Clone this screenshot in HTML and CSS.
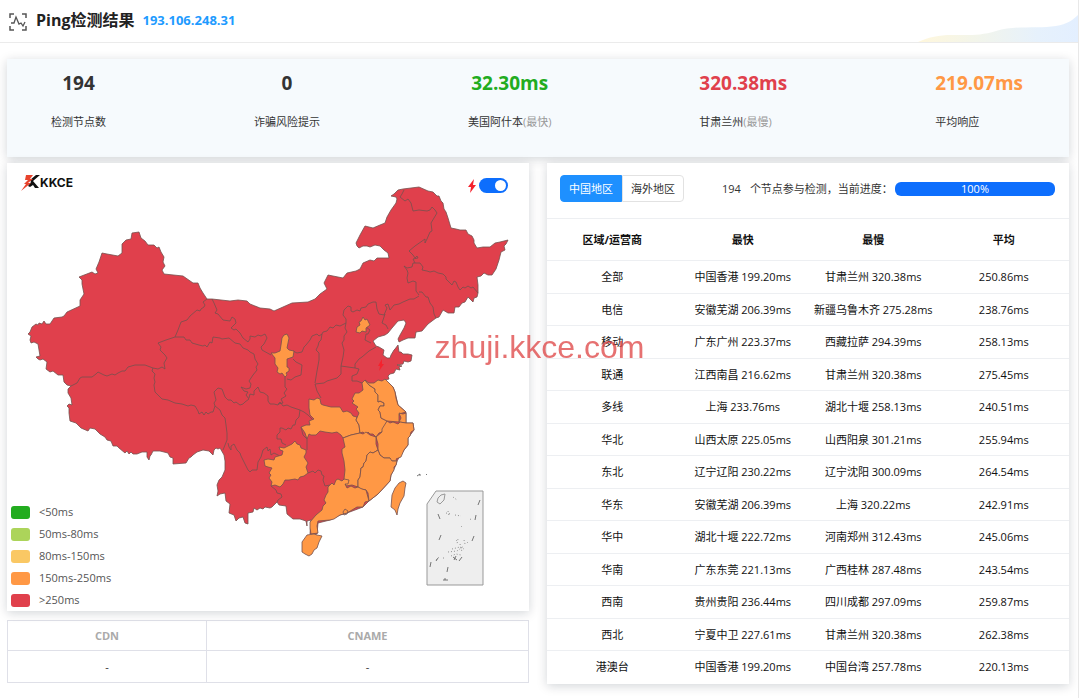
FILE: index.html
```html
<!DOCTYPE html>
<html lang="zh-CN">
<head>
  <meta charset="UTF-8">
  <title>Ping检测结果</title>
  <link rel="stylesheet" href="styles.css">
</head>
<body>
  <header class="header">
    <svg class="header-icon" width="20" height="20" viewBox="0 0 20 20" fill="none" stroke="#555" stroke-width="1.5">
      <path d="M2 6V2h4M14 2h4v4M18 14v4h-4M6 18H2v-4"/>
      <path d="M3 11h3l2-6 3 7 2-1 2 3 2-4" stroke-width="1.3"/>
    </svg>
    <h1>Ping检测结果</h1>
    <span class="ip">193.106.248.31</span>
    <svg class="wave" width="160" height="28" viewBox="0 0 160 28">
      <defs>
        <linearGradient id="waveFill">
          <stop offset="0" stop-color="#fff7dc"/>
          <stop offset="0.35" stop-color="#f3f5ea"/>
          <stop offset="0.75" stop-color="#e6f1fc"/>
          <stop offset="1" stop-color="#e3efff"/>
        </linearGradient>
      </defs>
      <path fill="url(#waveFill)" d="M0 28C12 23 20 21 34 21C50 21 62 22 78 17C98 11 120 15 138 12C149 10 155 6 160 1V28Z"/>
    </svg>
  </header>

  <main class="content">
    <section class="card stats">
      <div class="stat"><strong>194</strong><span>检测节点数</span></div>
      <div class="stat"><strong>0</strong><span>诈骗风险提示</span></div>
      <div class="stat"><strong class="fast">32.30ms</strong><span>美国阿什本<em>(最快)</em></span></div>
      <div class="stat stat-left"><strong class="slow">320.38ms</strong><span>甘肃兰州<em>(最慢)</em></span></div>
      <div class="stat stat-left"><strong class="avg">219.07ms</strong><span>平均响应</span></div>
    </section>

    <div class="columns">
      <div class="left">
        <section class="card map-card">
          <svg class="map" viewBox="7 163 522 448" stroke="#75504e" stroke-width="0.8" stroke-linejoin="round">
            <!-- mainland -->
            <path fill="#e0404c" d="M28 334L31 336 30 340 31 343 34 342 38 344 39 350 40 356 36 357 38 359 40 360 43 359 47 362 46 369 50 372 53 371 58 375 63 375 64 382 67 385 71 386 68 389 68 393 71 398 72 405 69 404 67 406 69 408 69 413 70 421 76 423 81 428 88 431 90 428 95 429 100 434 105 437 107 440 111 441 113 446 117 446 119 448 125 453 127 451 129 454 131 452 133 454 137 454 142 452 147 452 147 457 149 460 150 456 151 455 153 451 160 451 168 453 170 457 173 458 173 464 186 463 189 458 191 457 193 455 197 452 203 450 209 451 213 455 214 450 216 448 218 449 220 448 224 455 225 461 225 470 222 477 219 480 217 485 218 491 217 496 220 494 225 493 226 501 230 504 229 513 234 515 236 521 239 518 243 517 245 523 248 524 248 513 253 512 254 508 257 510 260 508 263 509 265 507 270 508 272 507 277 502 279 505 286 506 287 514 293 519 300 519 306 521 307 526 307 521 311 520 310 534 317 534 318 523 330 520 340 515 347 513 363 507 369 501 378 494 390 481 391 475 396 465 397 461 404 450 408 445 408 438 414 430 413 423 406 423 406 412 398 405 395 392 393 387 385 380 389 379 388 376 390 374 394 373 396 369 400 370 399 367 402 366 397 365 403 364 404 361 408 362 411 361 412 355 408 354 403 354 401 352 399 352 398 345 395 349 394 350 391 355 390 358 387 358 383 355 384 350 379 347 376 346 373 341 378 337 385 335 388 333 392 328 398 321 404 320 406 323 404 328 400 335 398 339 399 342 403 340 408 338 415 338 416 332 422 331 428 324 436 318 439 317 443 310 448 313 454 313 455 307 459 307 462 303 465 302 468 297 471 300 473 302 474 298 477 297 478 293 478 285 477 277 481 276 484 273 488 275 492 275 496 269 499 260 501 252 505 250 504 246 506 244 508 240 500 242 495 243 490 247 483 247 477 248 474 243 474 240 472 236 468 234 466 230 460 230 456 229 451 228 448 218 446 212 444 209 443 203 441 201 439 196 437 196 433 192 428 191 419 187 403 189 398 190 394 194 391 196 396 197 397 199 396 203 391 210 387 217 385 223 380 225 373 228 365 226 360 235 356 243 357 246 359 248 363 246 367 246 370 247 375 245 380 246 384 250 388 253 389 258 377 258 374 261 370 260 363 263 360 269 356 271 347 273 343 278 328 275 324 283 327 289 320 294 315 299 308 302 292 303 283 307 274 311 270 309 260 308 250 304 247 301 238 300 230 301 212 299 207 299 203 293 200 288 198 283 193 283 183 276 164 274 162 270 165 266 163 262 164 257 161 252 159 247 157 248 154 245 148 245 145 241 141 238 139 232 132 233 131 239 126 240 122 244 122 253 118 256 107 254 102 253 99 262 96 269 98 273 95 274 92 272 79 277 82 280 82 284 84 294 80 300 80 306 67 312 64 316 62 317 54 318 50 324 46 324 44 321 42 324 39 323 38 325 36 324 32 327 30 332Z"/>
            <!-- province borders -->
            <g fill="none">
              <path d="M207 299L203 302 205 305 204 307 201 309 200 311 197 310 190 316 187 320 181 322 178 330 175 337 166 340 158 343 161 347 160 350 162 352 165 355 167 358 164 363 165 369 162 367 158 369 153 368"/>
              <path d="M153 368L145 365 135 365 128 367 125 371 122 371 118 373 115 375 112 374 107 376 104 375 98 372 96 374 92 377 82 377 80 378 77 383 71 386"/>
              <path d="M153 368L152 371 155 374 154 378 155 382 154 385 155 392 162 399 168 400 175 403 182 404 188 406 191 405 195 406 198 411 199 414 202 412 204 415 206 412 208 414 211 412 213 412 215 406 214 403 216 400 214 392 218 388 222 389 225 397 228 400 231 400 234 403 236 402 240 405 243 404 245 402 249 399 246 395 248 392 244 391 241 387 246 389 250 388 251 384 249 381 253 375 257 370 256 367 258 364 255 359 254 354 250 352 248 350 243 348 240 344 235 343 229 338 222 339 220 338 213 337 212 343 210 342 207 347 205 345 203 346 199 345 192 343 190 340 186 340 184 337 180 337 175 337"/>
              <path d="M215 406L220 410 222 415 225 418 226 425 227 433 227 440 223 450M228 443L229 447 231 450 231 446 234 444 237 450 240 453 241 456 245 464 248 470 250 472 252 470 257 470 258 462 261 457 263 450 267 447 268 451 270 449 271 455 274 453 280 456"/>
              <path d="M249 398L250 394 254 395 254 391 258 387 260 392 264 393 268 396 268 401 270 404 274 404 278 405 280 402 283 406 287 405 291 407 300 410 304 412 308 415 313 420"/>
              <path d="M212 299L214 303 217 310 215 313 218 314 223 320 230 321 232 317 235 319 236 323 231 328 234 330 236 329 240 333 243 338 248 342 250 339 250 336 255 337 258 335 261 336 265 334 267 338 264 344 261 347 262 350 271 355"/>
              <path d="M285 377L285 387 287 389 284 393 286 396 281 399 283 403 278 404M293 359L296 362 302 365 301 375 295 377 291 380 287 379"/>
              <path d="M293 351L297 353 302 352 304 347 306 345 310 340 312 336 317 334 319 336 322 334 321 340 319 342 318 346 316 350 319 353 319 360 317 371 315 383"/>
              <path d="M322 334L323 332 327 331 330 327 333 328 336 325 340 326 346 323 346 319 343 315 344 310 348 306 351 307 351 311 353 312 357 310 360 311 361 308 366 307 368 304 373 302 376 302 377 309 379 314 384 315 387 308 385 305 388 304 390 310 394 305 399 304 403 302 410 299 414 299 419 296"/>
              <path d="M346 323L345 328 347 332 344 336 344 340 342 343 344 350 343 357 341 366 348 367 355 368 355 364 359 359 362 357 369 351 376 347M341 366L341 374 337 378 327 381 324 383 315 384 317 391 321 398M355 368L359 369 357 374 352 376 352 381 357 381 362 383"/>
              <path d="M366 327L370 330 368 334 366 334 365 340 371 343M385 314L383 320 382 323 386 325 388 329"/>
              <path d="M419 295L416 291 416 282 413 281 408 283 407 278 408 273 407 270 404 266 407 268 412 267 413 263 420 263 423 267 422 270 427 271 430 272 434 271 438 273 443 274 446 277 446 279 452 285 454 281 456 282 458 287 460 290 463 287 465 288 468 286 471 288 473 287 478 293M419 292L422 292 426 297 428 297 430 303 433 307 434 314 436 318"/>
              <path d="M415 263L413 259 418 258 417 256 415 258 413 255 409 251 415 246 425 239 425 243 427 239 430 232 432 231 431 223 437 213 435 210 432 207 430 210 427 211 419 210 413 211 411 203 408 199 405 201 400 197 402 194 404 190"/>
              <path d="M300 410L299 417 296 420 295 425 293 425 291 429 288 428 286 430 282 428 280 428 280 432 277 435 277 439 281 439 282 443 286 445M301 427L303 435 307 439 307 450M308 473L313 471 315 473 318 470 321 471 322 475 324 476 323 480 325 486 330 485M271 486L276 490 277 493 281 494 282 497 278 500 277 502"/>
            </g>
            <!-- 150ms-250ms provinces -->
            <g fill="#ff9845">
              <path d="M271 353L275 353 280 351 281 345 282 338 284 335 287 334 289 338 287 348 289 350 294 351 293 357 287 359 287 367 289 368 289 371 286 373 287 375 285 377 282 373 280 374 277 372 278 368 275 364 275 358Z"/>
              <path d="M363 317L365 320 367 319 370 325 366 328 366 332 362 331 360 333 356 332 357 327 360 325 359 322 361 321Z"/>
              <path d="M309 399L314 400 317 398 320 399 321 404 323 405 331 407 340 407 343 412 347 411 351 413 353 416 357 417 356 420 359 425 360 433 351 435 343 438 341 435 337 432 332 433 325 432 320 431 316 435 311 435 309 434 307 439 305 433 301 427 306 425 310 425 309 421 314 419 310 415 309 408Z"/>
              <path d="M362 383L365 380 369 385 372 387 375 389 375 392 378 395 378 402 380 401 384 403 384 406 380 406 378 410 380 412 381 418 387 421 386 424 382 432 379 433 376 437 373 434 370 434 368 432 366 435 363 432 360 433 359 425 356 420 359 413 356 409 358 407 352 403 354 401 352 399 355 393 359 393 363 390Z"/>
              <path d="M365 380L369 383 374 383 378 380 382 381 385 379 393 387 395 392 396 398 398 405 406 412 399 414 399 422 387 421 381 418 380 412 378 410 380 406 384 406 384 403 380 401 378 402 378 395 375 392 375 389 369 385Z"/>
              <path d="M399 413L403 414 406 413 406 423 399 422 401 418Z"/>
              <path d="M387 421L390 423 393 422 398 424 400 422 406 423 413 423 414 430 411 432 410 436 408 438 408 445 404 450 401 457 396 459 397 461 391 461 390 458 384 458 380 455 378 450 378 444 376 437 382 432 382 429Z"/>
              <path d="M343 438L351 435 360 433 363 434 366 432 370 435 376 437 376 444 378 450 373 453 370 452 367 455 366 461 364 463 363 467 361 468 360 477 358 480 358 487 352 485 346 486 345 483 344 479 345 470 344 461 342 453 342 449 345 447Z"/>
              <path d="M378 450L380 455 384 458 390 458 392 461 397 461 396 465 394 467 394 470 391 475 390 481 378 494 369 501 368 493 366 490 361 489 358 487 358 480 360 477 361 468 363 467 364 463 366 461 367 455 370 452 373 453Z"/>
              <path d="M328 487L332 483 334 485 336 480 338 479 342 481 344 479 349 480 348 484 345 484 347 488 351 486 355 488 358 487 362 489 366 490 369 501 365 502 363 507 357 507 347 513 340 515 334 519 330 520 318 521 317 526 318 533 311 534 310 528 310 522 316 515 322 510 323 506 326 503 324 500 326 495 328 492Z"/>
              <path fill="none" d="M343 512L345 509 348 511 347 514 344 515Z"/>
              <path d="M307 535L314 534 317 535 322 536 319 542 317 548 314 550 312 554 309 556 305 554 302 552 302 542Z"/>
              <path d="M264 460L268 459 274 460 275 457 282 455 283 451 280 450 279 447 284 448 292 444 295 441 297 444 300 445 301 448 306 450 306 453 304 457 308 463 306 467 308 473 304 476 300 477 298 480 295 479 289 480 285 480 283 484 280 487 275 485 271 486 272 482 269 478 271 475 269 473 272 468 268 467 265 466Z"/>
              <path d="M403 481L406 483 405 488 404 496 400 503 398 509 397 515 395 510 391 507 392 495 395 488 399 483Z"/>
            </g>
            <!-- southern islands inset -->
            <path fill="#eee" stroke="#999" stroke-width="1" d="M436 491H483V585H427V504Z"/>
            <path fill="none" stroke="#999" stroke-width="1" d="M438 498L441 495 445 494 444 500 440 504 437 502Z"/>
            <g fill="none" stroke="#555">
              <path d="M480 500L478 505M476 515L475 520M438 514L440 519M441 535L439 540M474 536L472 541M431 562L430 567M462 557L459 561M448 567L447 572"/>
              <path stroke="#777" stroke-dasharray="1 2" d="M446 513L451 514M448 511L449 516M453 497L457 500M455 515L461 516M470 519L472 520M461 526L462 527M456 541L458 539 457 544M464 540L465 544M467 543L469 541M452 549L460 547 464 549M448 552L457 551 464 546M451 556L456 554 461 555M443 558L446 558M436 560L440 556M460 544L462 552"/>
              <path d="M417 476L420 474 420 476M436 561L438 558M443 580L448 580M445 578V580M453 557L457 560M456 556L454 560M426 474.500L427 474.500"/>
            </g>
            <path fill="#f5222d" stroke="none" d="M382 359L378 366H380L379 371 384 364H382Z"/>
          </svg>

          <div class="logo">
            <svg width="19" height="17" viewBox="0 0 19 17">
              <path fill="#111" d="M19 1H15L9 6 10 8 7 12 9 13 12 11 14 14H18L12 7Z"/>
              <path fill="#e8432d" d="M5 1H12L9 5H12L7 9H10L0 17 5 10H3L7 6H4Z"/>
            </svg>
            <b>KKCE</b>
          </div>
          <label class="speed" title="极速模式">
            <svg width="10" height="14" viewBox="0 0 10 14"><path fill="#f5222d" d="M7 0L1 8H4L3 14 9 6H6Z"/></svg>
            <input type="checkbox" class="switch" aria-label="极速模式" checked>
          </label>
          <ul class="legend">
            <li><i class="c1"></i>&lt;50ms</li>
            <li><i class="c2"></i>50ms-80ms</li>
            <li><i class="c3"></i>80ms-150ms</li>
            <li><i class="c4"></i>150ms-250ms</li>
            <li><i class="c5"></i>&gt;250ms</li>
          </ul>
        </section>

        <table class="dns">
          <thead>
            <tr><th class="cdn">CDN</th><th>CNAME</th></tr>
          </thead>
          <tbody>
            <tr><td>-</td><td>-</td></tr>
          </tbody>
        </table>
      </div>

      <section class="card result-card">
        <div class="toolbar">
          <div class="tabs">
            <button type="button" class="active">中国地区</button><button type="button">海外地区</button>
          </div>
          <p class="progress-label"><span>194</span>个节点参与检测，当前进度：</p>
          <div class="progress" role="progressbar" aria-valuenow="100" aria-valuemin="0" aria-valuemax="100">100%</div>
        </div>
        <table class="result">
          <thead>
            <tr><th>区域/运营商</th><th>最快</th><th>最慢</th><th>平均</th></tr>
          </thead>
          <tbody>
            <tr><td>全部</td><td>中国香港 199.20ms</td><td>甘肃兰州 320.38ms</td><td>250.86ms</td></tr>
            <tr><td>电信</td><td>安徽芜湖 206.39ms</td><td>新疆乌鲁木齐 275.28ms</td><td>238.76ms</td></tr>
            <tr><td>移动</td><td>广东广州 223.37ms</td><td>西藏拉萨 294.39ms</td><td>258.13ms</td></tr>
            <tr><td>联通</td><td>江西南昌 216.62ms</td><td>甘肃兰州 320.38ms</td><td>275.45ms</td></tr>
            <tr><td>多线</td><td>上海 233.76ms</td><td>湖北十堰 258.13ms</td><td>240.51ms</td></tr>
            <tr><td>华北</td><td>山西太原 225.05ms</td><td>山西阳泉 301.21ms</td><td>255.94ms</td></tr>
            <tr><td>东北</td><td>辽宁辽阳 230.22ms</td><td>辽宁沈阳 300.09ms</td><td>264.54ms</td></tr>
            <tr><td>华东</td><td>安徽芜湖 206.39ms</td><td>上海 320.22ms</td><td>242.91ms</td></tr>
            <tr><td>华中</td><td>湖北十堰 222.72ms</td><td>河南郑州 312.43ms</td><td>245.06ms</td></tr>
            <tr><td>华南</td><td>广东东莞 221.13ms</td><td>广西桂林 287.48ms</td><td>243.54ms</td></tr>
            <tr><td>西南</td><td>贵州贵阳 236.44ms</td><td>四川成都 297.09ms</td><td>259.87ms</td></tr>
            <tr><td>西北</td><td>宁夏中卫 227.61ms</td><td>甘肃兰州 320.38ms</td><td>262.38ms</td></tr>
            <tr><td>港澳台</td><td>中国香港 199.20ms</td><td>中国台湾 257.78ms</td><td>220.13ms</td></tr>
          </tbody>
        </table>
      </section>
    </div>
  </main>

  <div class="watermark">zhuji.kkce.com</div>
</body>
</html>
```
FILE: styles.css
```css
* { box-sizing: border-box; }
body {
  margin: 0;
  min-height: 100vh;
  border-right: 1px solid #e8e8e8;
  font: 11px/16px "Open Sans", "Noto Sans CJK SC", sans-serif;
  color: #333;
  background: #fff;
}
table { width: 100%; border-collapse: collapse; table-layout: fixed; }
th, td { padding: 0; text-align: center; }

/* header */
.header { position: relative; display: flex; align-items: center; height: 43px; padding: 0 8px 2px; border-bottom: 1px solid #ebebeb; }
.header-icon { margin-top: 3px; }
.header h1 { margin: 0 8px 0 8px; font-size: 16px; line-height: 24px; color: #222; }
.ip { font-size: 13px; font-weight: 700; color: #1e9bff; }
.wave { position: absolute; right: 0; bottom: 0; }

.content { padding: 16px 9px 14px 7px; }
.card { background: #fff; box-shadow: 0 2px 10px rgba(0, 21, 41, 0.18); }

/* summary */
.stats { display: flex; justify-content: space-between; padding: 12px 46px 27px 44px; background: #f6fafd; }
.stat { display: flex; flex-direction: column; gap: 19px; text-align: center; }
.stat strong { font-size: 19px; line-height: 24px; }
.stat em { font-style: normal; color: #999; }
.stat-left { text-align: left; }
.stat .fast { color: #22ac1f; }
.stat .slow { color: #e0404c; }
.stat .avg { color: #ff9845; }

.columns { display: grid; grid-template-columns: 1fr 1fr; gap: 18px; margin-top: 6px; }

/* map */
.map-card { position: relative; }
.map { display: block; width: 100%; }
.logo { position: absolute; left: 14px; top: 11px; display: flex; }
.logo b { font: 700 12px/17px Inter, sans-serif; color: #111; }
.speed { position: absolute; right: 21px; top: 15px; display: flex; align-items: center; gap: 2px; }
.switch { appearance: none; width: 29px; height: 15px; margin: 0; padding: 2px; border-radius: 8px; background: #bbb; }
.switch::before { content: ""; display: block; width: 11px; height: 11px; border-radius: 50%; background: #fff; }
.switch:checked { background: #0d6efd; }
.switch:checked::before { margin-left: 14px; }
.legend { position: absolute; left: 4px; bottom: 0; margin: 0; padding: 0; list-style: none; line-height: 22px; color: #555; }
.legend li { display: flex; align-items: center; gap: 9px; }
.legend i { width: 19px; height: 13px; border-radius: 3px; }
.c1 { background: #22ac1f; }
.c2 { background: #acd45a; }
.c3 { background: #fac864; }
.c4 { background: #ff9845; }
.c5 { background: #e0404c; }

.dns { margin-top: 9px; }
.dns th, .dns td { border: 1px solid #dfe0e8; }
.dns th { height: 30px; color: #aaa; }
.dns td { height: 32px; }
.dns .cdn { width: 199px; }

/* results */
.toolbar { display: flex; align-items: center; height: 55px; padding: 0 14px 4px 13px; }
.tabs { display: flex; }
.tabs button { height: 27px; padding: 0 8px; border: 1px solid #e2e2e2; border-radius: 0 4px 4px 0; background: #fff; font: inherit; color: #333; white-space: nowrap; }
.tabs .active { border-color: #1e90ff; border-radius: 4px 0 0 4px; background: #1e90ff; color: #fff; }
.progress-label { flex: 1; margin: 0 0 0 38px; white-space: nowrap; }
.progress-label span { margin-right: 9px; }
.progress { width: 160px; height: 14px; border-radius: 6px; background: #0d6efd; color: #fff; line-height: 14px; text-align: center; }
.result { color: #111; }
.result th, .result td { border-top: 1px solid #edeff2; }
.result th { height: 42px; }
.result td { height: 32px; white-space: nowrap; }
.result tbody tr:nth-child(odd) td { height: 33px; }

.watermark {
  position: fixed;
  inset: 0;
  display: flex;
  align-items: center;
  justify-content: center;
  padding-bottom: 4px;
  font: 32px/36px "Liberation Sans", sans-serif;
  color: rgba(222, 66, 66, 0.75);
  pointer-events: none;
}
```
